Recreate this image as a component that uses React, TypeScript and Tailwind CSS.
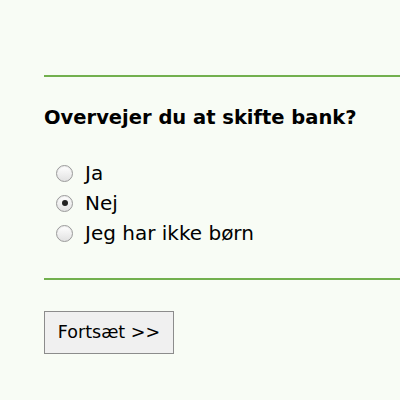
const options = [
  { label: "Ja", checked: false },
  { label: "Nej", checked: true },
  { label: "Jeg har ikke børn", checked: false },
];

function Radio({ checked }: { checked: boolean }) {
  return (
    <span className="flex h-[17px] w-[17px] items-center justify-center rounded-full border border-[#9a9a9a] bg-gradient-to-b from-white to-[#e2e2e2] shadow-[inset_0_1px_1px_rgba(0,0,0,0.08)]">
      {checked && <span className="h-[6px] w-[6px] rounded-full bg-[#222]" />}
    </span>
  );
}

export default function App() {
  return (
    <div className="h-[400px] w-[400px] overflow-hidden bg-[#f8fcf5] font-['DejaVu_Sans',Verdana,sans-serif] text-black">
      <div className="pl-11 pt-[75px]">
        <div className="h-[2px] bg-[#72b04e]" />
        <h2 className="mt-[29px] text-[19.5px] font-bold leading-[24px]">
          Overvejer du at skifte bank?
        </h2>
        <div className="mt-[31px] flex flex-col gap-[6px] pl-[12px]">
          {options.map((o) => (
            <label key={o.label} className="flex h-6 items-center gap-[12px] text-[20px] leading-[24px]">
              <Radio checked={o.checked} />
              <span>{o.label}</span>
            </label>
          ))}
        </div>
        <div className="mt-[33px] h-[2px] bg-[#72b04e]" />
        <button className="mt-[31px] h-[43px] w-[130px] border border-[#8c8c8c] bg-[#f0f0f0] text-[17.5px] text-black">
          Fortsæt &gt;&gt;
        </button>
      </div>
    </div>
  );
}
